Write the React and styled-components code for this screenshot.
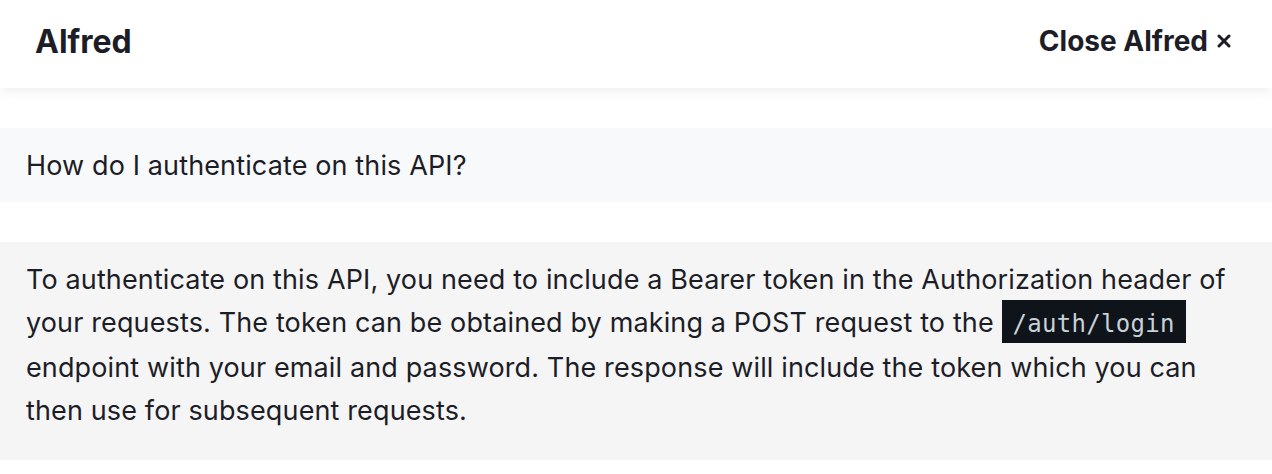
import React from "react";
import styled, { createGlobalStyle } from "styled-components";

const Global = createGlobalStyle`
  html, body { margin: 0; padding: 0; background: #ffffff; }
  body { font-family: Inter, "Noto Sans", sans-serif; color: #1c1d26; }
`;

const Page = styled.div`
  display: flex;
  flex-direction: column;
`;

const Header = styled.header`
  height: 88px;
  box-sizing: border-box;
  display: flex;
  align-items: center;
  justify-content: space-between;
  padding: 0 41px 6px 35px;
  background: #ffffff;
  box-shadow: 0 2px 12px rgba(0, 0, 0, 0.08);
  position: relative;
  z-index: 1;
`;

const Title = styled.h1`
  margin: 0;
  font-size: 32px;
  font-weight: 700;
  color: #1c1d26;
`;

const CloseButton = styled.button`
  border: none;
  background: none;
  padding: 0;
  font-family: inherit;
  font-size: 28px;
  font-weight: 700;
  color: #1c1d26;
  display: flex;
  align-items: center;
  gap: 9px;
  cursor: pointer;
`;

const Thread = styled.div`
  display: flex;
  flex-direction: column;
  gap: 40px;
  padding-top: 40px;
`;

const Bubble = styled.div`
  background: ${(p) => (p.$role === "user" ? "#f8f9fb" : "#f5f5f5")};
  padding: ${(p) => (p.$role === "user" ? "16px 26px 15px" : "16px 40px 28px 26px")};
  font-size: 27px;
  line-height: 43px;
  letter-spacing: 0.13px;
  color: #1c1d26;
`;

const Code = styled.code`
  font-family: "DejaVu Sans Mono", "Liberation Mono", monospace;
  font-size: 24px;
  letter-spacing: 0.3px;
  background: #0f131a;
  color: #c9d1d9;
  padding: 10px 11px 5px;
`;

export default function App() {
  return (
    <Page>
      <Global />
      <Header>
        <Title>Alfred</Title>
        <CloseButton>
          Close Alfred
          <svg width="14" height="14" viewBox="0 0 14 14">
            <path d="M2 2 L12 12 M12 2 L2 12" stroke="#1c1d26" strokeWidth="3" strokeLinecap="round" />
          </svg>
        </CloseButton>
      </Header>
      <Thread>
        <Bubble $role="user">How do I authenticate on this API?</Bubble>
        <Bubble $role="assistant">
          To authenticate on this API, you need to include a Bearer token in the Authorization header of
          your requests. The token can be obtained by making a POST request to the <Code>/auth/login</Code>{" "}
          endpoint with your email and password. The response will include the token which you can then use for
          subsequent requests.
        </Bubble>
      </Thread>
    </Page>
  );
}
